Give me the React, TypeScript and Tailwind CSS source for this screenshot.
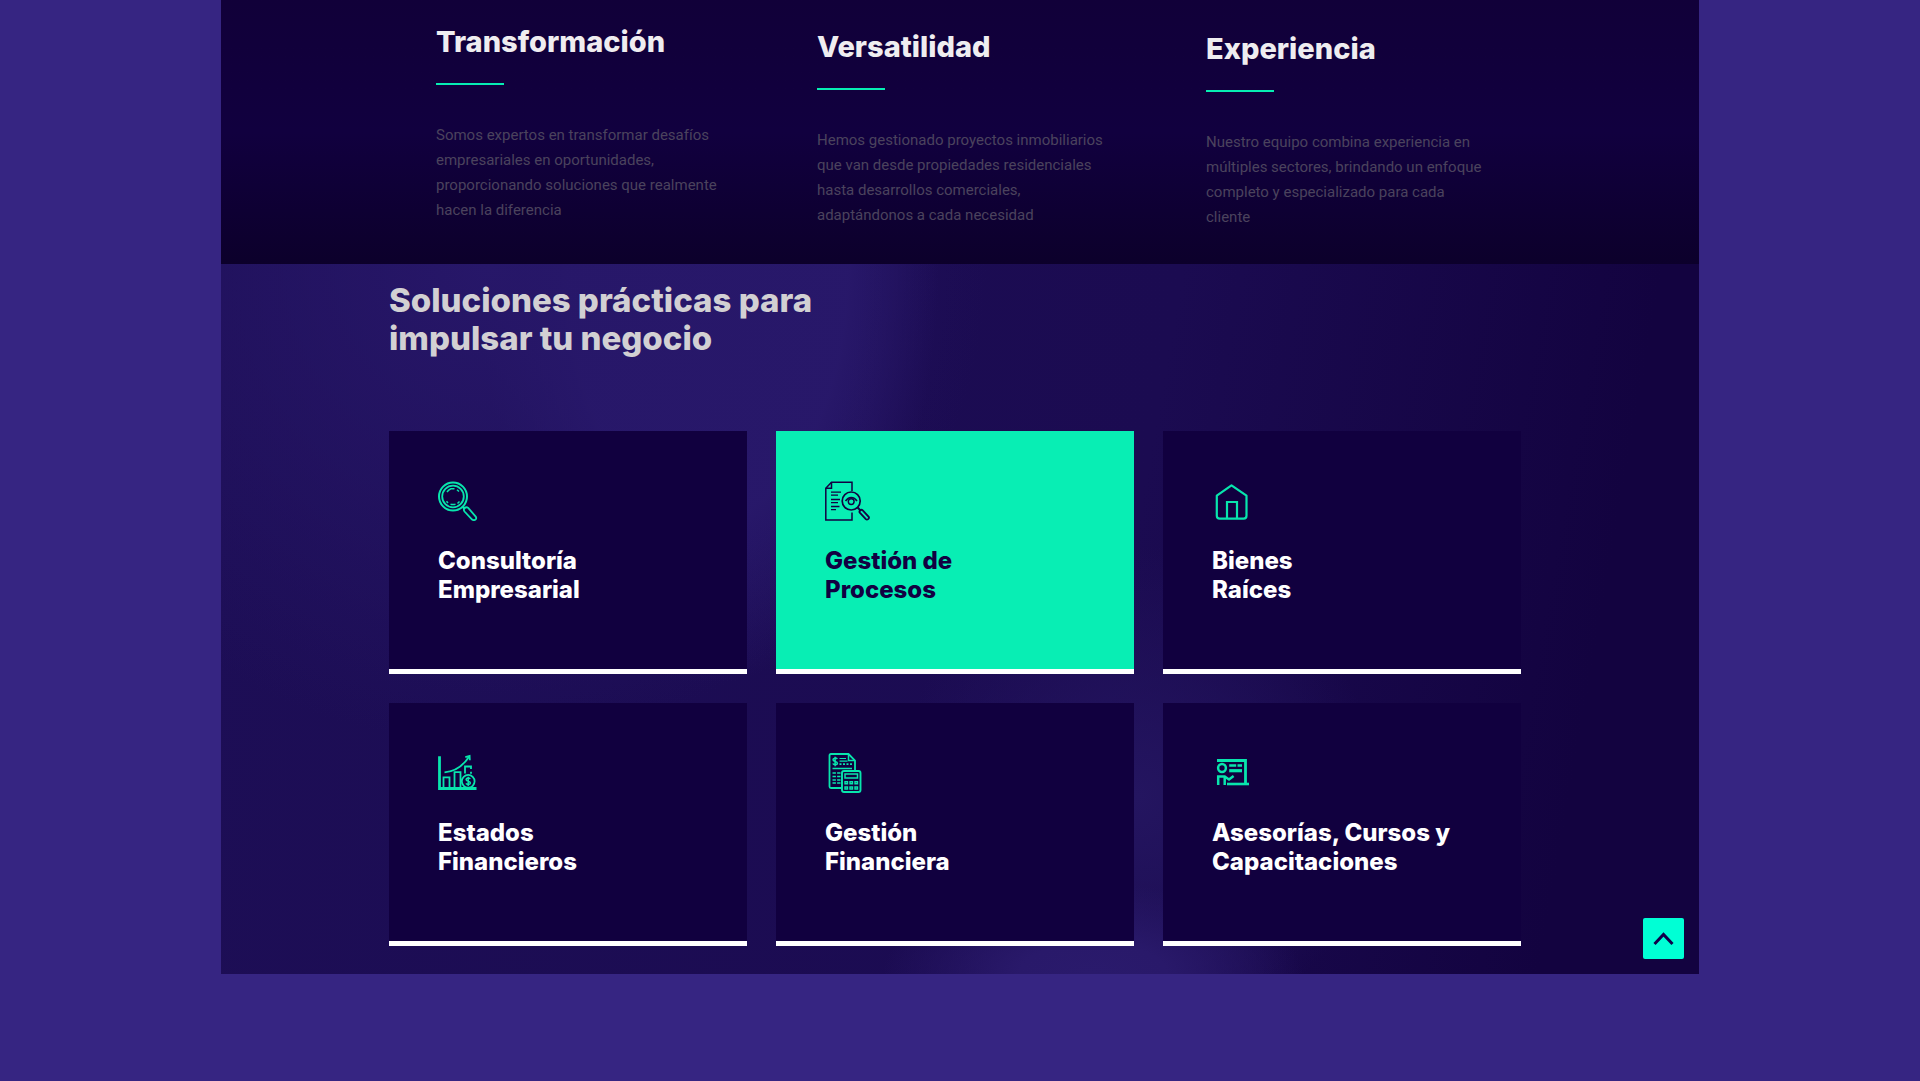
import type { ReactNode } from "react";

interface Pillar {
  title: string;
  lines: string[];
  offset: string;
}

interface Service {
  title: [string, string];
  icon: ReactNode;
  active?: boolean;
}

const PILLARS: Pillar[] = [
  {
    title: "Transformación",
    lines: [
      "Somos expertos en transformar desafíos",
      "empresariales en oportunidades,",
      "proporcionando soluciones que realmente",
      "hacen la diferencia",
    ],
    offset: "pt-6",
  },
  {
    title: "Versatilidad",
    lines: [
      "Hemos gestionado proyectos inmobiliarios",
      "que van desde propiedades residenciales",
      "hasta desarrollos comerciales,",
      "adaptándonos a cada necesidad",
    ],
    offset: "pt-[29px]",
  },
  {
    title: "Experiencia",
    lines: [
      "Nuestro equipo combina experiencia en",
      "múltiples sectores, brindando un enfoque",
      "completo y especializado para cada",
      "cliente",
    ],
    offset: "pt-[31px]",
  },
];

function Icon({ children }: { children: ReactNode }) {
  return (
    <svg
      width="48"
      height="40"
      viewBox="0 0 48 40"
      fill="none"
      stroke="currentColor"
      strokeWidth="1.5"
      aria-hidden="true"
    >
      {children}
    </svg>
  );
}

const searchIcon = (
  <Icon>
    <circle cx="15" cy="15.5" r="14" strokeWidth="2" />
    <circle cx="15" cy="15.5" r="10.8" strokeWidth="1.8" />
    <path d="M9 11a8 8 0 0 1 4-3.3h3.5M19 8.8l2 1.7M21.5 20.5l-2 2M17.5 23.2a9 9 0 0 1-5 0M10 22l-1.5-1.7" />
    <path d="M24.5 25.5l2.2 2.2" strokeWidth="2.5" />
    <path
      d="M26.5 30.5l7.6 8c1.4 1.2 3.2.4 3.9-.6.4-.9.2-1.8-.5-2.6l-7.3-8.4a2.6 2.6 0 0 0-3.7 3.6z"
      strokeWidth="1.8"
    />
  </Icon>
);

const documentIcon = (
  <Icon>
    <path d="M27 10V1.2H6.5L.8 7.2V39H27v-7.5" />
    <path d="M6.5 1.2v6H.8" />
    <path d="M6 11.2h10M6 14.2h7M6 18.5h9M6 21.7h7M6 25.5h8.5M6 28.7h5" strokeWidth="1.3" />
    <circle cx="26.2" cy="20" r="9" strokeWidth="1.7" />
    <path d="M20.5 20c3-4.6 8.5-4.6 11.5 0" strokeWidth="1.5" />
    <circle cx="26.2" cy="20.6" r="2.9" strokeWidth="1.4" />
    <path d="M32.7 26.5l3.2 3.5" strokeWidth="2" />
    <path
      d="M34.8 31.6l6 6.6c1.4 1.3 4-.6 2.9-2.4l-6.2-6.6c-1.4-1.2-3.9.9-2.7 2.4z"
      strokeWidth="1.8"
    />
  </Icon>
);

const houseIcon = (
  <Icon>
    <path
      d="M4.8 14.7L19.5 4.3 34.5 14.7v20c0 1.9-1 2.9-2.9 2.9H7.7c-1.9 0-2.9-1-2.9-2.9z"
      strokeWidth="2.2"
      strokeLinejoin="round"
    />
    <path d="M15 37.5V21h10v16.5" strokeWidth="2.2" />
  </Icon>
);

const chartIcon = (
  <Icon>
    <path d="M1.5 3.2V35.5H38.5" strokeWidth="2.8" />
    <path d="M6.5 19.3c11-.8 19-7.3 24.3-15.4" strokeWidth="1.8" />
    <path d="M27.3 4.2l4.3-1.3.2 4.3" strokeWidth="1.8" />
    <path d="M5.5 35V24.3h6V35M16.5 35V19.2h6V35M27 20.5v-7h6v2.6M33 18.8v2" strokeWidth="1.8" />
    <circle cx="30.2" cy="28.3" r="6.4" strokeWidth="1.8" />
    <path
      d="M32.2 26c-.7-1.4-4.1-1.3-4.1.5 0 2.2 4.3 1.2 4.3 3.5 0 1.8-3.7 1.9-4.4.4M30.2 23.7v9.2"
      strokeWidth="1.5"
    />
  </Icon>
);

const calculatorIcon = (
  <Icon>
    <path
      d="M30 17V7.5L23.5 1H6C5 1 4.5 1.6 4.5 2.5v31c0 1 .6 1.5 1.5 1.5h10.5"
      strokeWidth="1.8"
    />
    <path d="M23.5 1v6.5H30" strokeWidth="1.5" />
    <path d="M12.3 6c-1-1.5-4.3-1-4.3.8 0 2.2 4.4 1.3 4.4 3.5 0 1.9-3.8 1.9-4.6.2M10.1 3.7v9.5" />
    <path d="M14.5 5.5h6.5M14.5 8.2h8" strokeWidth="1.2" />
    <path d="M14.5 11.2h12.5" strokeDasharray="2 1.5" strokeWidth="1.8" />
    <path d="M7.5 15.5h19.5" />
    <path d="M7.5 20h8M7.5 23.5h8M7.5 27h8M7.5 30h8" strokeDasharray="3.4 1.2" strokeWidth="1.6" />
    <rect x="17" y="18" width="18.5" height="21" rx="2" strokeWidth="1.9" />
    <rect x="20" y="21" width="12.5" height="4" />
    <path
      d="M20 28.8h2.5v2H20zM25 28.8h2.5v2H25zM30 28.8h2.5v2H30zM20 34h2.5v2H20zM25 34h2.5v2H25zM30 34h2.5v2H30z"
      strokeWidth="1.4"
    />
  </Icon>
);

const trainingIcon = (
  <Icon>
    <path d="M5 7.5h28.5V30.5" strokeWidth="2.8" />
    <path d="M15 31h22" strokeWidth="2.6" />
    <circle cx="10" cy="15" r="3.9" strokeWidth="2.5" />
    <path d="M6.2 32v-8.5h6.5l4.3 3 4.6-3.5" strokeWidth="2.5" />
    <path d="M12.7 23.5V32" strokeWidth="2.5" />
    <path d="M17.2 12.5h7M25.5 12.5h4.5" strokeWidth="2.6" />
    <path d="M17.2 17.7h12.8" strokeWidth="3.2" />
  </Icon>
);

const SERVICES: Service[] = [
  { title: ["Consultoría", "Empresarial"], icon: searchIcon },
  { title: ["Gestión de", "Procesos"], icon: documentIcon, active: true },
  { title: ["Bienes", "Raíces"], icon: houseIcon },
  { title: ["Estados", "Financieros"], icon: chartIcon },
  { title: ["Gestión", "Financiera"], icon: calculatorIcon },
  { title: ["Asesorías, Cursos y", "Capacitaciones"], icon: trainingIcon },
];

function PillarColumn({ pillar }: { pillar: Pillar }) {
  return (
    <article className={pillar.offset}>
      <h3 className="text-[29px] leading-9 font-extrabold text-[#efedf0]">{pillar.title}</h3>
      <div className="mt-[23px] h-0.5 w-[68px] bg-[#06eeb3]" />
      <p className="mt-[38px] font-['Roboto',sans-serif] text-[15px] leading-[25px] text-[#4b435d]">
        {pillar.lines.map((line) => (
          <span key={line} className="block whitespace-nowrap">
            {line}
          </span>
        ))}
      </p>
    </article>
  );
}

function ServiceCard({ service }: { service: Service }) {
  return (
    <article
      className={`h-[243px] border-b-[5px] border-white pt-[50px] pl-[49px] ${
        service.active ? "bg-[#08eeb4] text-[#120042]" : "bg-[#11003f] text-white"
      }`}
    >
      <div className={service.active ? "" : "text-[#08e5ad]"}>{service.icon}</div>
      <h3 className="mt-[25px] text-2xl leading-[29px] font-extrabold">
        {service.title[0]}
        <br />
        {service.title[1]}
      </h3>
    </article>
  );
}

export default function App() {
  return (
    <div className="min-h-screen bg-[#362582] pb-[107px] font-['Inter',sans-serif]">
      <main className="relative mx-auto max-w-[1478px]">
        <section className="grid h-[264px] grid-cols-[381fr_389fr_325fr] bg-linear-to-b from-[#110039] via-[#11003f] via-50% to-[#0c002b] pr-[168px] pl-[215px]">
          {PILLARS.map((pillar) => (
            <PillarColumn key={pillar.title} pillar={pillar} />
          ))}
        </section>

        <section className="bg-[#180850] bg-[radial-gradient(ellipse_500px_480px_at_18%_0%,#271769_0%,#26166700_100%),radial-gradient(ellipse_230px_420px_at_33%_0%,#28186a_0%,#28186a_60%,#1c0c5400_100%),radial-gradient(ellipse_210px_90px_at_59%_100%,#2a1a6c_0%,#29196a_35%,#1a0a5000_100%),radial-gradient(ellipse_240px_250px_at_62%_75%,#241560_0%,#1a0a5000_100%),linear-gradient(100deg,#1d0e56_0%,#1b0b51_60%,#130340_90%)] pt-[17px] pr-[178px] pb-7 pl-[168px]">
          <h2 className="text-[33px] leading-[38px] font-extrabold text-[#d2d0d3]">
            Soluciones prácticas para
            <br />
            impulsar tu negocio
          </h2>
          <div className="mt-[74px] grid grid-cols-3 gap-[29px]">
            {SERVICES.map((service) => (
              <ServiceCard key={service.title[1]} service={service} />
            ))}
          </div>
        </section>

        <button
          type="button"
          aria-label="Volver arriba"
          className="absolute right-[15px] bottom-[15px] grid size-[41px] place-items-center rounded-xs bg-[#00ffd5] text-[#11004a]"
        >
          <svg width="22" height="14" viewBox="0 0 22 14" fill="none" aria-hidden="true">
            <path d="M1.5 12L10.5 2.5l9 9.5" stroke="currentColor" strokeWidth="3" />
          </svg>
        </button>
      </main>
    </div>
  );
}
